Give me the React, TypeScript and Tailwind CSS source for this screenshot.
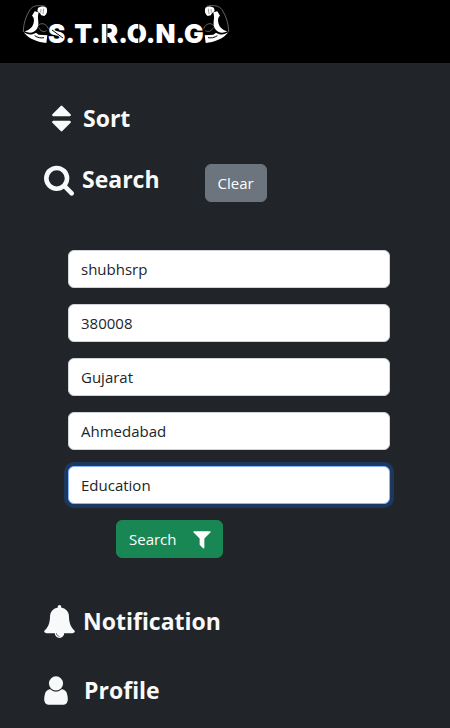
import type { ReactNode } from "react";

const ICONS = {
  sort: {
    box: "384 0 1024 1792",
    path: "M1408 1088q0 26-19 45l-448 448q-19 19-45 19t-45-19l-448-448q-19-19-19-45t19-45 45-19h896q26 0 45 19t19 45zm0-384q0 26-19 45t-45 19h-896q-26 0-45-19t-19-45 19-45l448-448q19-19 45-19t45 19l448 448q19 19 19 45z",
  },
  search: {
    box: "64 0 1664 1792",
    path: "M1216 832q0-185-131.5-316.5t-316.5-131.5-316.5 131.5-131.5 316.5 131.5 316.5 316.5 131.5 316.5-131.5 131.5-316.5zm512 832q0 52-38 90t-90 38q-54 0-90-38l-343-342q-179 124-399 124-143 0-273.5-55.5t-225-150-150-225-55.5-273.5 55.5-273.5 150-225 225-150 273.5-55.5 273.5 55.5 225 150 150 225 55.5 273.5q0 220-124 399l343 343q37 37 37 90z",
  },
  bell: {
    box: "64 0 1664 1792",
    path: "M912 1696q0-16-16-16-59 0-101.5-42.5t-42.5-101.5q0-16-16-16t-16 16q0 73 51.5 124.5t124.5 51.5q16 0 16-16zm816-288q0 52-38 90t-90 38h-448q0 106-75 181t-181 75-181-75-75-181h-448q-52 0-90-38t-38-90q50-42 91-88t85-119.5 74.5-158.5 50-206 19.5-260q0-152 117-282.5t307-158.5q-8-19-8-39 0-40 28-68t68-28 68 28 28 68q0 20-8 39 190 28 307 158.5t117 282.5q0 139 19.5 260t50 206 74.5 158.5 85 119.5 91 88z",
  },
  user: {
    box: "256 0 1280 1792",
    path: "M1536 1399q0 109-62.5 187t-150.5 78h-854q-88 0-150.5-78t-62.5-187q0-85 8.5-160.5t31.5-152 58.5-131 94-89 134.5-34.5q131 128 313 128t313-128q76 0 134.5 34.5t94 89 58.5 131 31.5 152 8.5 160.5zm-256-887q0 159-112.5 271.5t-271.5 112.5-271.5-112.5-112.5-271.5 112.5-271.5 271.5-112.5 271.5 112.5 112.5 271.5z",
  },
  filter: {
    box: "0 0 1792 1792",
    path: "M1595 295q17 41-14 70l-493 493v742q0 42-39 59-13 5-25 5-27 0-45-19l-256-256q-19-19-19-45v-486l-493-493q-31-29-14-70 17-39 59-39h1280q42 0 59 39z",
  },
};

function Icon({ name, className }: { name: keyof typeof ICONS; className: string }) {
  return (
    <svg viewBox={ICONS[name].box} fill="currentColor" aria-hidden="true" className={className}>
      <path d={ICONS[name].path} />
    </svg>
  );
}

function Arm({ className }: { className: string }) {
  return (
    <svg viewBox="36 12 84 120" aria-hidden="true" className={className}>
      <g fill="none" stroke="#777" strokeWidth="2.5">
        <path d="M40 96C40 72 48 48 60 29C68 17 86 14 106 19" />
        <path d="M84 78C93 66 108 70 115 86" />
        <path d="M86 82C90 92 100 98 110 92" />
      </g>
      <g fill="#fff">
        <path d="M82 33L84 24C92 18 102 18 110 23C113 33 111 43 103 48L94 46L90 40Z" />
        <path d="M66 47L74 34L86 37L84 48C83 62 89 72 81 86C72 99 58 101 44 94C60 89 68 81 71 68C73 58 72 52 66 47Z" />
        <path d="M41 97C52 104 66 106 78 98L86 104L112 106L109 129C84 127 56 117 41 97Z" />
      </g>
      <path d="M93 27L92 38M101 26L99 42" fill="none" stroke="#666" strokeWidth="2" />
      <path d="M74 107C82 113 94 115 102 113" fill="none" stroke="#000" strokeWidth="3" />
    </svg>
  );
}

function MenuLink({ icon, label, className }: { icon: ReactNode; label: string; className: string }) {
  return (
    <a href="#" className={"flex items-start " + className}>
      {icon}
      <span className="text-[23px] leading-8 font-bold">{label}</span>
    </a>
  );
}

const FIELDS = [
  { label: "Username", value: "shubhsrp" },
  { label: "Pincode", value: "380008" },
  { label: "State", value: "Gujarat" },
  { label: "City", value: "Ahmedabad" },
  { label: "Category", value: "Education", active: true },
];

export default function App() {
  return (
    <div className="min-h-screen bg-[#212529] font-['Open_Sans','Noto_Sans',sans-serif] text-[#f8f9fa]">
      <header className="flex h-[63px] items-start bg-black pl-[22px]">
        <Arm className="mt-1 h-10 w-7" />
        <span className="relative mt-[18px] -mx-0.5 font-['Inter',sans-serif] text-[26px] leading-8 font-black text-white">
          S.T.R.O.N.G
          {/* Stencil cuts through the rounded letters */}
          <svg
            viewBox="0 0 156 32"
            aria-hidden="true"
            className="absolute inset-0 size-full"
            stroke="#000"
            strokeWidth="1"
          >
            <path d="M4 12L15 20M59 6V27M91 6V27" />
          </svg>
        </span>
        <Arm className="mt-1 h-10 w-7 -scale-x-100" />
      </header>

      <nav className="flex flex-col px-11 pt-[39px]">
        <MenuLink icon={<Icon name="sort" className="h-[33px] w-[19px]" />} label="Sort" className="gap-3 pl-2" />
        <div className="mt-7 flex items-start">
          <MenuLink icon={<Icon name="search" className="h-[33px] w-[30px]" />} label="Search" className="gap-2" />
          <button
            type="button"
            className="mt-px ml-[45px] h-[38px] rounded-md border border-[#6c757d] bg-[#6c757d] px-3 text-[15px] leading-6 text-white"
          >
            Clear
          </button>
        </div>

        <form className="mt-12 flex flex-col gap-4 pr-4 pl-6" onSubmit={(e) => e.preventDefault()}>
          {FIELDS.map((f) => (
            <input
              key={f.label}
              aria-label={f.label}
              defaultValue={f.value}
              className={
                "h-[38px] w-full rounded-md border bg-white px-3 text-[15px] leading-6 text-[#212529] outline-none " +
                (f.active ? "border-[#86b7fe] ring-4 ring-[#1c3861]" : "border-[#ced4da]")
              }
            />
          ))}
          <button
            type="submit"
            className="ml-12 flex h-[38px] items-center gap-3.5 self-start rounded-md border border-[#198754] bg-[#198754] pr-[9px] pl-3 text-[15px] leading-6 text-white"
          >
            Search
            <Icon name="filter" className="size-[22px]" />
          </button>
        </form>

        <MenuLink
          icon={<Icon name="bell" className="h-[33px] w-[31px]" />}
          label="Notification"
          className="mt-[47px] gap-2"
        />
        <MenuLink icon={<Icon name="user" className="h-[33px] w-6" />} label="Profile" className="mt-9 gap-4" />
      </nav>
    </div>
  );
}
